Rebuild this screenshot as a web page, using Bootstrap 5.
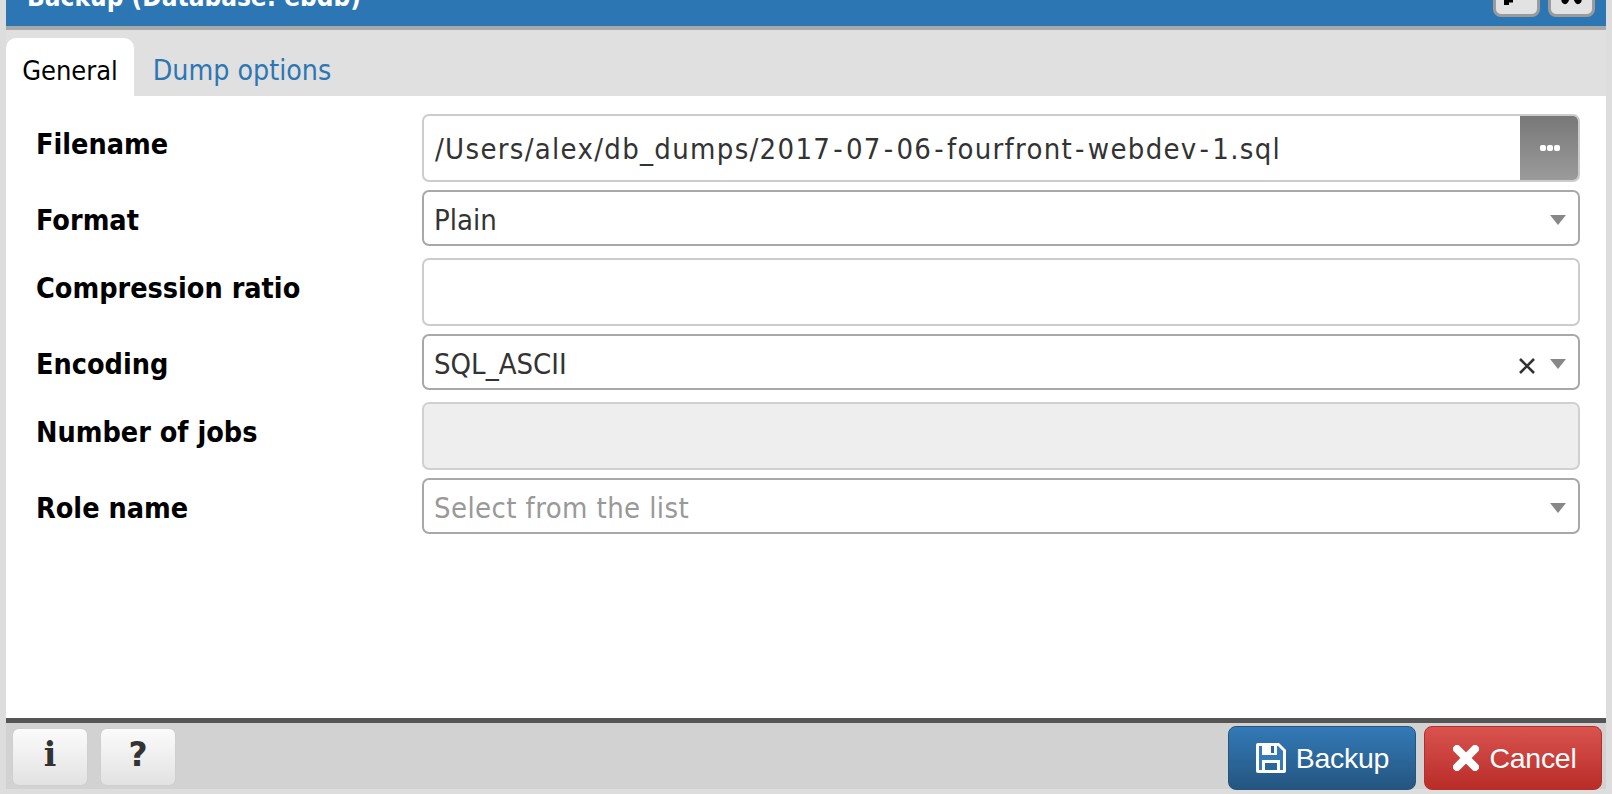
<!DOCTYPE html>
<html lang="en">
<head>
<meta charset="utf-8">
<title>Backup</title>
<link href="https://cdn.jsdelivr.net/npm/bootstrap@5.3.0/dist/css/bootstrap.min.css" rel="stylesheet">
<style>
html,body{height:100%;overflow:hidden}
body{background:#ddd;font-family:"DejaVu Sans","Liberation Sans",sans-serif;font-stretch:condensed;color:#000}
.dlg{height:789px;margin:0 6px;background:#fff}
.dlg-head{height:30px;background:#2c76b4;border-bottom:4px solid #a8a8a8;padding:0 9px 0 21px;overflow:hidden}
.dlg-title{color:#fff;font-weight:700;font-size:26px;line-height:30px;margin-top:-18px;height:30px;white-space:nowrap}
.head-btn{width:47px;height:35px;margin-top:-18px;background:#e2e2e2;border:3px solid #9b9b9b;border-radius:8px;overflow:hidden;padding-bottom:9px}
.head-btn svg{display:block}
.head-gap{margin-right:2px}
.tabbar{height:66px;background:#e0e0e0;padding-top:8px}
.tab-item{height:58px;font-size:27px;line-height:66px;text-align:center}
.tab-on{width:128px;background:#fff;color:#000;border-radius:10px 10px 0 0}
.tab-off{width:216px;color:#2c76b4;font-size:28.3px}
.dlg-body{padding:18px 26px 0 0;height:622px}
.f-row{margin-bottom:8px}
.f-row.spaced{margin-bottom:12px}
.f-label{width:416px;padding-left:30px;font-weight:700;font-size:28.5px;line-height:62px;height:50px;flex:none;white-space:nowrap}
.f-box{height:56px;border:2px solid #a8a8a8;border-radius:7px;background:#fff;font-size:29px;color:#333;padding:5px 12px 0 10px;white-space:nowrap;flex:1 1 auto;min-width:0}
.f-tall{height:68px;border-color:#ccc}
.f-off{background:#eee;border-color:#d0d0d0}
.f-ph{color:#999}
.f-ph span:first-child{letter-spacing:.4px}
.f-file{padding:0 0 0 11px;overflow:hidden}
.path-text{letter-spacing:1.3px;padding-top:4px}
.hy{padding:0 2px}
.dots-btn{width:60px;height:68px;margin:-2px -2px -2px 0;background:linear-gradient(#777,#9c9c9c);flex:none;gap:1px}
.dots-btn i{display:block;width:6px;height:6px;border-radius:2px;background:#fff}
.caret-down{width:0;height:0;border-left:8px solid transparent;border-right:8px solid transparent;border-top:10px solid #888;margin-top:-2px}
.clear-x{width:18px;height:18px;margin-right:14px;margin-top:2px}
.dlg-foot{height:71px;background:#d2d2d2;border-top:5px solid #555;padding:0 4px 0 6px}
.ft-btn{width:76px;height:58px;border-radius:7px;border:1px solid #cfcfcf;background:linear-gradient(#fbfbfb,#e2e2e2);color:#333;font-size:33px;font-weight:700;line-height:50px;padding:0 0 4px;text-align:center;margin-top:5px;font-stretch:normal;--bs-btn-hover-bg:#eee}
.ft-i{font-family:"DejaVu Serif",serif;font-weight:900}
.act-btn{height:64px;margin-top:3px;border-radius:8px;color:#fff;font-family:"Liberation Sans",sans-serif;font-size:28.5px;padding:0;letter-spacing:-.3px;gap:9px}
.act-save{width:188px;margin-right:8px;background:linear-gradient(#337ab7,#245580);border:1px solid #245580}
.act-quit{width:178px;padding-left:3px;gap:11px;background:linear-gradient(#d9534f,#b92c28);border:1px solid #b92c28}
</style>
</head>
<body>
<div class="dlg d-flex flex-column">
  <div class="dlg-head d-flex justify-content-between">
    <div class="dlg-title">Backup (Database: ebdb)</div>
    <div class="d-flex gap-2 head-gap">
      <div class="head-btn d-flex align-items-end">
        <svg width="41" height="20" viewBox="0 0 41 20"><path d="M8 0h9v17.5h-4V20H8z" fill="#000"/></svg>
      </div>
      <div class="head-btn d-flex align-items-end">
        <svg width="41" height="20" viewBox="0 0 41 20"><path d="M20.5 2L14 15.5M20.5 2L27 15.5" stroke="#000" stroke-width="7" stroke-linecap="round" fill="none"/></svg>
      </div>
    </div>
  </div>
  <div class="tabbar d-flex">
    <div class="tab-item tab-on">General</div>
    <div class="tab-item tab-off">Dump options</div>
  </div>
  <div class="dlg-body">
    <div class="d-flex f-row">
      <div class="f-label">Filename</div>
      <div class="f-box f-tall f-file d-flex align-items-center justify-content-between">
        <span class="path-text">/Users/alex/db_dumps/2017<span class="hy">-</span>07<span class="hy">-</span>06<span class="hy">-</span>fourfront<span class="hy">-</span>webdev<span class="hy">-</span>1.sql</span>
        <span class="dots-btn d-flex align-items-center justify-content-center"><i></i><i></i><i></i></span>
      </div>
    </div>
    <div class="d-flex f-row spaced">
      <div class="f-label">Format</div>
      <div class="f-box d-flex align-items-center justify-content-between"><span>Plain</span><span class="caret-down"></span></div>
    </div>
    <div class="d-flex f-row">
      <div class="f-label">Compression ratio</div>
      <div class="f-box f-tall"></div>
    </div>
    <div class="d-flex f-row spaced">
      <div class="f-label">Encoding</div>
      <div class="f-box d-flex align-items-center"><span class="flex-grow-1">SQL_ASCII</span>
        <svg class="clear-x" viewBox="0 0 18 18"><path d="M2 2L16 16M16 2L2 16" stroke="#333" stroke-width="2.6" fill="none"/></svg>
        <span class="caret-down"></span></div>
    </div>
    <div class="d-flex f-row">
      <div class="f-label">Number of jobs</div>
      <div class="f-box f-tall f-off"></div>
    </div>
    <div class="d-flex f-row">
      <div class="f-label">Role name</div>
      <div class="f-box f-ph d-flex align-items-center justify-content-between"><span>Select from the list</span><span class="caret-down"></span></div>
    </div>
  </div>
  <div class="dlg-foot d-flex justify-content-between">
    <div class="d-flex gap-2">
      <button class="btn ft-btn ft-i" type="button">i</button>
      <button class="btn ft-btn ms-1" type="button">?</button>
    </div>
    <div class="d-flex">
      <button class="btn act-btn act-save d-flex align-items-center justify-content-center" type="button">
        <svg width="32" height="32" viewBox="0 0 32 32"><path d="M3 1h21l7 7v21a2 2 0 0 1-2 2H3a2 2 0 0 1-2-2V3a2 2 0 0 1 2-2z" fill="#fff"/><path d="M4 4h3v9h15V4h1l5 5v19h-3V18H7v10H4z" fill="#337ab7"/><path d="M10 21h12v7H10zM16 4h3v7h-3z" fill="#2a6699"/></svg>Backup</button>
      <button class="btn act-btn act-quit d-flex align-items-center justify-content-center" type="button">
        <svg width="26" height="26" viewBox="0 0 26 26"><path d="M4 4L22 22M22 4L4 22" stroke="#fff" stroke-width="8" stroke-linecap="round"/></svg>Cancel</button>
    </div>
  </div>
</div>
</body>
</html>
